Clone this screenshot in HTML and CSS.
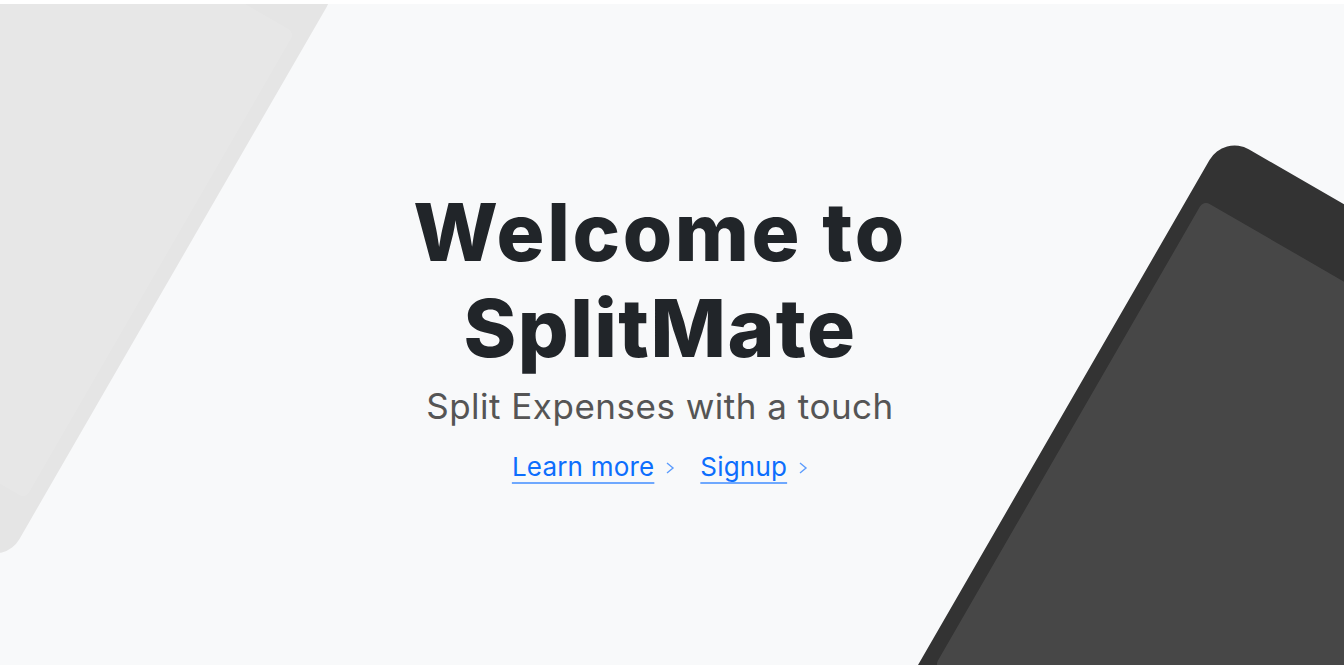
FILE: index.html
```html
<!DOCTYPE html>
<html lang="en">
<head>
<meta charset="utf-8">
<title>SplitMate</title>
<link rel="stylesheet" href="styles.css">
</head>
<body>
<section class="hero">
  <div class="device device-light"></div>
  <div class="hero-content">
    <h1 class="hero-title"><span class="line-1">Welcome to</span><br><span class="line-2">SplitMate</span></h1>
    <p class="hero-lead">Split Expenses with a touch</p>
    <div class="hero-links">
      <a class="icon-link" href="#">Learn more</a>
      <svg class="chev" width="10" height="12" viewBox="0 0 10 12"><polyline points="2,1 8,6 2,11" fill="none" stroke="#5c9cfd" stroke-width="1.4"/></svg>
      <a class="icon-link second" href="#">Signup</a>
      <svg class="chev" width="10" height="12" viewBox="0 0 10 12"><polyline points="2,1 8,6 2,11" fill="none" stroke="#5c9cfd" stroke-width="1.4"/></svg>
    </div>
  </div>
  <div class="device device-dark"></div>
</section>
</body>
</html>
```
FILE: styles.css
```css
html, body {
  margin: 0;
  padding: 0;
  background: #ffffff;
}
body {
  font-family: "Inter", "Open Sans", sans-serif;
}
.hero {
  position: relative;
  margin-top: 4px;
  height: 661px;
  overflow: hidden;
  background: #f8f9fa;
  display: flex;
  justify-content: center;
  padding-right: 24px;
  box-sizing: border-box;
}
.hero-content {
  position: relative;
  z-index: 1;
  display: flex;
  flex-direction: column;
  align-items: center;
  padding-top: 180px;
  text-align: center;
}
.hero-title {
  margin: 0;
  font-size: 80px;
  line-height: 96px;
  font-weight: 800;
  color: #212529;
}
.line-1 {
  letter-spacing: 2.6px;
}
.line-2 {
  letter-spacing: 1.4px;
}
.hero-lead {
  margin: 8px 0 0;
  font-size: 35px;
  line-height: 45px;
  font-weight: 400;
  letter-spacing: 0.5px;
  color: #555555;
}
.hero-links {
  margin-top: 20px;
  display: flex;
  align-items: center;
  line-height: 36px;
}
.icon-link {
  font-size: 26px;
  letter-spacing: 0.2px;
  color: #0d6efd;
  text-decoration: underline;
  text-decoration-color: #6ea8fe;
  text-decoration-thickness: 2px;
  text-underline-offset: 6px;
}
.icon-link.second {
  margin-left: 25px;
}
.chev {
  margin-left: 11px;
  margin-top: 2px;
}
.device {
  position: absolute;
  width: 420px;
  height: 672px;
  border-radius: 29px;
}
.device::before {
  content: "";
  position: absolute;
  top: 10%;
  bottom: 10%;
  left: 15px;
  right: 15px;
  border-radius: 7px;
  background: rgba(255, 255, 255, 0.1);
}
.device-dark {
  left: 1224px;
  top: 131px;
  background: #333333;
  transform-origin: 0 0;
  transform: rotate(30deg);
}
.device-light {
  left: -415px;
  top: -112px;
  background: #e5e5e5;
  transform-origin: 100% 100%;
  transform: rotate(30deg);
}
```
